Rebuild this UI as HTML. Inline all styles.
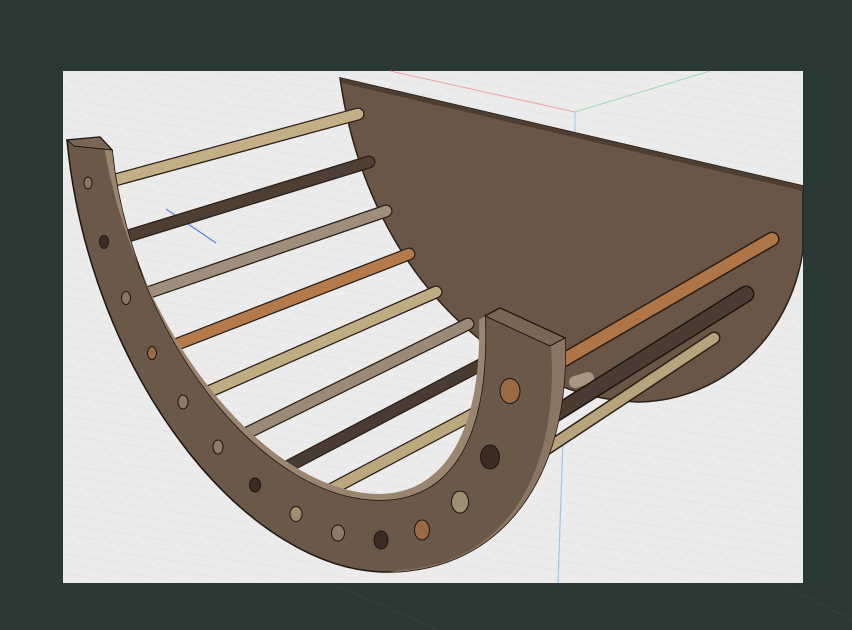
<!DOCTYPE html>
<html><head><style>
html,body{margin:0;padding:0;background:#2a3836;width:852px;height:630px;overflow:hidden}
svg{display:block}
</style></head><body>
<svg width="852" height="630" viewBox="0 0 852 630" xmlns="http://www.w3.org/2000/svg">
<defs>
<pattern id="g" width="9" height="9" patternUnits="userSpaceOnUse" patternTransform="skewX(-30) rotate(8)">
<path d="M9 0H0V9" fill="none" stroke="#dcdcdc" stroke-width="0.6"/>
</pattern>
</defs>
<rect width="852" height="630" fill="#2a3836"/>
<line x1="330" y1="583" x2="440" y2="630" stroke="#34423f" stroke-width="1"/>
<line x1="780" y1="583" x2="852" y2="620" stroke="#34423f" stroke-width="1"/>
<rect x="63" y="71" width="740" height="512" fill="#ececec"/>
<rect x="63" y="71" width="740" height="512" fill="url(#g)"/>
<line x1="390" y1="71" x2="575" y2="112" stroke="#f0a0a0" stroke-width="1"/>
<line x1="575" y1="112" x2="710" y2="71" stroke="#a0d8b0" stroke-width="1"/>
<line x1="575" y1="112" x2="575" y2="140" stroke="#a0c4f0" stroke-width="1"/>
<line x1="563" y1="440" x2="558" y2="583" stroke="#9cc4f0" stroke-width="1.2"/>
<line x1="166" y1="209" x2="216" y2="243" stroke="#5a80e0" stroke-width="1.2"/>
<!-- back panel -->
<path d="M340,78 L803,186 L803,250 C790,340 720,400 640,402 C520,400 370,290 340,78 Z" fill="#6a5646" stroke="#2a2018" stroke-width="1.5"/>
<path d="M340,78 L803,186 L803,191 L342,83 Z" fill="#4e3e32"/>
<!-- rods -->
<g stroke-linecap="round" fill="none">
<line x1="575" y1="382" x2="588" y2="378" stroke="#a89682" stroke-width="12"/>
<line x1="560" y1="362" x2="772" y2="239" stroke="#2a1e16" stroke-width="15"/>
<line x1="560" y1="362" x2="772" y2="239" stroke="#b07546" stroke-width="12"/>
<line x1="555" y1="414" x2="746" y2="294" stroke="#1e1610" stroke-width="17"/>
<line x1="555" y1="414" x2="746" y2="294" stroke="#4a3c32" stroke-width="14"/>
<line x1="545" y1="450" x2="714" y2="338" stroke="#2a2018" stroke-width="13"/>
<line x1="545" y1="450" x2="714" y2="338" stroke="#b8a47c" stroke-width="10"/>
<g stroke-width="13">
<line x1="115" y1="180" x2="358" y2="114" stroke="#2a2018"/>
<line x1="128" y1="236" x2="369" y2="162" stroke="#2a2018"/>
<line x1="150" y1="292" x2="386" y2="211" stroke="#2a2018"/>
<line x1="175" y1="345" x2="409" y2="254" stroke="#2a2018"/>
<line x1="208" y1="392" x2="436" y2="292" stroke="#2a2018"/>
<line x1="245" y1="434" x2="468" y2="324" stroke="#2a2018"/>
<line x1="285" y1="468" x2="490" y2="360" stroke="#2a2018"/>
<line x1="330" y1="490" x2="500" y2="400" stroke="#2a2018"/>
</g>
<g stroke-width="10.5">
<line x1="115" y1="180" x2="358" y2="114" stroke="#c3ae86"/>
<line x1="128" y1="236" x2="369" y2="162" stroke="#4e3e34"/>
<line x1="150" y1="292" x2="386" y2="211" stroke="#a08e7c"/>
<line x1="175" y1="345" x2="409" y2="254" stroke="#b57a4c"/>
<line x1="208" y1="392" x2="436" y2="292" stroke="#bfac82"/>
<line x1="245" y1="434" x2="468" y2="324" stroke="#9c8a78"/>
<line x1="285" y1="468" x2="490" y2="360" stroke="#4a3c32"/>
<line x1="330" y1="490" x2="500" y2="400" stroke="#bca87e"/>
</g>
</g>
<!-- front arc -->
<path d="M67,140 L100,137 L112,150 C130,330 260,500 380,500 C450,500 490,440 485,316 L500,308 L565,338 C570,480 500,570 390,572 C250,575 90,380 67,140 Z" fill="#6a5848" stroke="#1e1610" stroke-width="1.5"/>
<path d="M100,137 L112,150 C130,330 260,500 380,500 C450,500 490,440 485,316 L479,320 C482,430 445,493 380,494 C265,494 135,330 104,146 Z" fill="#9a8670"/>
<path d="M550,344 L565,338 C570,480 500,570 390,572 L400,570 C500,565 560,480 551,346 Z" fill="#8a7662"/>
<path d="M67,140 L100,137 L112,150 L74,146 Z" fill="#7a6654" stroke="#1e1610" stroke-width="1"/>
<path d="M485,316 L500,308 L565,338 L550,346 Z" fill="#7a6654" stroke="#1e1610" stroke-width="1"/>
<!-- holes -->
<g stroke="#1e1610" stroke-width="1">
<ellipse cx="88" cy="183" rx="4" ry="6" fill="#8a7660"/>
<ellipse cx="104" cy="242" rx="4.5" ry="6.5" fill="#3a2c24"/>
<ellipse cx="126" cy="298" rx="4.5" ry="6.5" fill="#8a7660"/>
<ellipse cx="152" cy="353" rx="4.5" ry="6.5" fill="#9a6a44"/>
<ellipse cx="183" cy="402" rx="5" ry="7" fill="#8e7a66"/>
<ellipse cx="218" cy="447" rx="5" ry="7" fill="#8e7a66"/>
<ellipse cx="255" cy="485" rx="5.5" ry="7" fill="#3a2c24"/>
<ellipse cx="296" cy="514" rx="6" ry="7.5" fill="#a08e70"/>
<ellipse cx="338" cy="533" rx="6.5" ry="8" fill="#8e7a66"/>
<ellipse cx="381" cy="540" rx="7" ry="9" fill="#3a2c24"/>
<ellipse cx="422" cy="530" rx="7.5" ry="10" fill="#9a6a44"/>
<ellipse cx="460" cy="502" rx="8.5" ry="11" fill="#9c9070"/>
<ellipse cx="490" cy="457" rx="9.5" ry="12" fill="#3a2c24"/>
<ellipse cx="510" cy="391" rx="10" ry="12.5" fill="#9a6a44"/>
</g>
</svg>
</body></html>
